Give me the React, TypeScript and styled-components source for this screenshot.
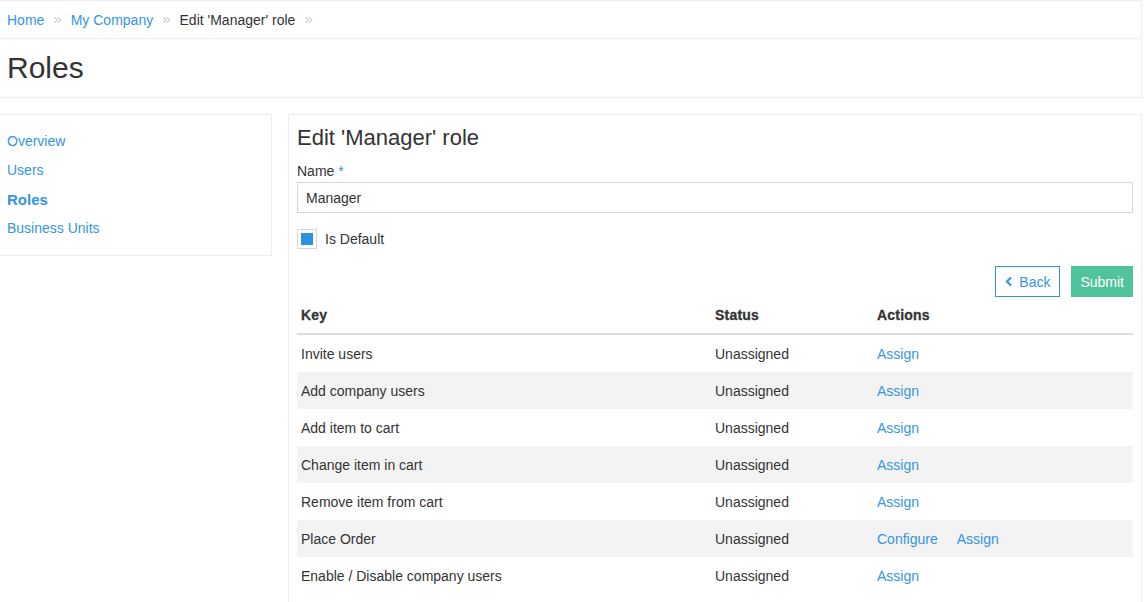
import React from "react";
import styled, { createGlobalStyle } from "styled-components";

const GlobalStyle = createGlobalStyle`
  body {
    margin: 0;
    font-family: "Liberation Sans", Arial, sans-serif;
    font-size: 14px;
    color: #333;
    background: #fff;
  }
`;

const blue = "#3396e3";

const Page = styled.div`
  width: 1142px;
  overflow: hidden;
`;

const Breadcrumbs = styled.nav`
  display: flex;
  align-items: center;
  height: 37px;
  padding: 0 7px;
  border: 1px solid #eee;
  border-left: none;
  box-sizing: content-box;
`;

const Crumb = styled.a<{ $current?: boolean }>`
  color: ${(p) => (p.$current ? "#333" : blue)};
  text-decoration: none;
`;

const Sep = styled.span`
  color: #ccc;
  font-size: 15px;
  margin: 0 9px;
  position: relative;
  top: -1px;
`;

const Header = styled.header`
  height: 58px;
  padding: 0 7px;
  display: flex;
  align-items: center;
  border-right: 1px solid #eee;
  border-bottom: 1px solid #eee;
`;

const Title = styled.h1`
  margin: 0;
  font-size: 30px;
  font-weight: normal;
  position: relative;
  top: 0;
`;

const Body = styled.div`
  display: flex;
  align-items: flex-start;
  gap: 16px;
  margin-top: 16px;
`;

const Sidebar = styled.aside`
  width: 272px;
  flex-shrink: 0;
  box-sizing: border-box;
  border: 1px solid #eee;
  border-left: none;
  padding: 18px 7px 18px;
  display: flex;
  flex-direction: column;
  gap: 12px;
`;

const SideLink = styled.a<{ $active?: boolean }>`
  color: ${blue};
  text-decoration: none;
  line-height: 17px;
  font-weight: ${(p) => (p.$active ? "bold" : "normal")};
  font-size: ${(p) => (p.$active ? "15px" : "14px")};
`;

const Panel = styled.main`
  flex: 1;
  border: 1px solid #eee;
  border-bottom: none;
  padding: 9px 8px 20px;
  min-height: 500px;
`;

const PanelTitle = styled.h2`
  margin: 0 0 11px;
  font-size: 22px;
  font-weight: normal;
  line-height: 28px;
`;

const Label = styled.label`
  display: block;
  margin-bottom: 2px;
  line-height: 17px;
  span {
    color: ${blue};
  }
`;

const Input = styled.input`
  width: 100%;
  box-sizing: border-box;
  height: 31px;
  border: 1px solid #d6d6d6;
  padding: 0 8px;
  font-family: inherit;
  font-size: 14px;
  color: #333;
  outline: none;
`;

const CheckRow = styled.div`
  display: flex;
  align-items: center;
  gap: 8px;
  margin-top: 16px;
`;

const Check = styled.span`
  width: 20px;
  height: 20px;
  box-sizing: border-box;
  border: 1px solid #d6d6d6;
  display: flex;
  align-items: center;
  justify-content: center;
  &::after {
    content: "";
    width: 12px;
    height: 12px;
    background: #2a93e4;
  }
`;

const Actions = styled.div`
  display: flex;
  justify-content: flex-end;
  gap: 11px;
  margin-top: 17px;
`;

const Button = styled.button<{ $primary?: boolean }>`
  height: 31px;
  box-sizing: border-box;
  font-family: inherit;
  font-size: 14px;
  padding: 0 ${(p) => (p.$primary ? "8px" : "9px")};
  display: flex;
  align-items: center;
  gap: 6px;
  cursor: pointer;
  border: 1px solid ${(p) => (p.$primary ? "#50c39d" : "#3492dc")};
  background: ${(p) => (p.$primary ? "#50c39d" : "#fff")};
  color: ${(p) => (p.$primary ? "#fff" : blue)};
`;

const Table = styled.table`
  width: 100%;
  table-layout: fixed;
  border-collapse: collapse;
`;

const Th = styled.th<{ $w?: number }>`
  text-align: left;
  font-weight: 900;
  font-size: 14px;
  height: 36px;
  padding: 0 4px;
  border-bottom: 2px solid #ddd;
  width: ${(p) => (p.$w ? `${p.$w}px` : "auto")};
  -webkit-text-stroke: 0.3px #333;
  letter-spacing: 0.2px;
`;

const Row = styled.tr`
  &:nth-child(even) {
    background: #f3f3f3;
  }
`;

const Td = styled.td`
  height: 37px;
  padding: 0 4px;
`;

const Action = styled.a`
  color: ${blue};
  text-decoration: none;
  margin-right: 19px;
`;

const rows: { key: string; actions: string[] }[] = [
  { key: "Invite users", actions: ["Assign"] },
  { key: "Add company users", actions: ["Assign"] },
  { key: "Add item to cart", actions: ["Assign"] },
  { key: "Change item in cart", actions: ["Assign"] },
  { key: "Remove item from cart", actions: ["Assign"] },
  { key: "Place Order", actions: ["Configure", "Assign"] },
  { key: "Enable / Disable company users", actions: ["Assign"] },
];

export default function App() {
  return (
    <Page>
      <GlobalStyle />
      <Breadcrumbs>
        <Crumb href="#">Home</Crumb>
        <Sep>»</Sep>
        <Crumb href="#">My Company</Crumb>
        <Sep>»</Sep>
        <Crumb $current>Edit 'Manager' role</Crumb>
        <Sep>»</Sep>
      </Breadcrumbs>
      <Header>
        <Title>Roles</Title>
      </Header>
      <Body>
        <Sidebar>
          <SideLink href="#">Overview</SideLink>
          <SideLink href="#">Users</SideLink>
          <SideLink href="#" $active>Roles</SideLink>
          <SideLink href="#">Business Units</SideLink>
        </Sidebar>
        <Panel>
          <PanelTitle>Edit 'Manager' role</PanelTitle>
          <Label>
            Name <span>*</span>
          </Label>
          <Input defaultValue="Manager" />
          <CheckRow>
            <Check />
            <span>Is Default</span>
          </CheckRow>
          <Actions>
            <Button>
              <svg width="8" height="11" viewBox="0 0 8 11">
                <path d="M6 1.5 2 5.5 6 9.5" fill="none" stroke="#3396e3" strokeWidth="2.2" />
              </svg>
              Back
            </Button>
            <Button $primary>Submit</Button>
          </Actions>
          <Table>
            <colgroup>
              <col style={{ width: 414 }} />
              <col style={{ width: 162 }} />
              <col />
            </colgroup>
            <thead>
              <tr>
                <Th>Key</Th>
                <Th>Status</Th>
                <Th>Actions</Th>
              </tr>
            </thead>
            <tbody>
              {rows.map((r) => (
                <Row key={r.key}>
                  <Td>{r.key}</Td>
                  <Td>Unassigned</Td>
                  <Td>
                    {r.actions.map((a) => (
                      <Action href="#" key={a}>
                        {a}
                      </Action>
                    ))}
                  </Td>
                </Row>
              ))}
            </tbody>
          </Table>
        </Panel>
      </Body>
    </Page>
  );
}
